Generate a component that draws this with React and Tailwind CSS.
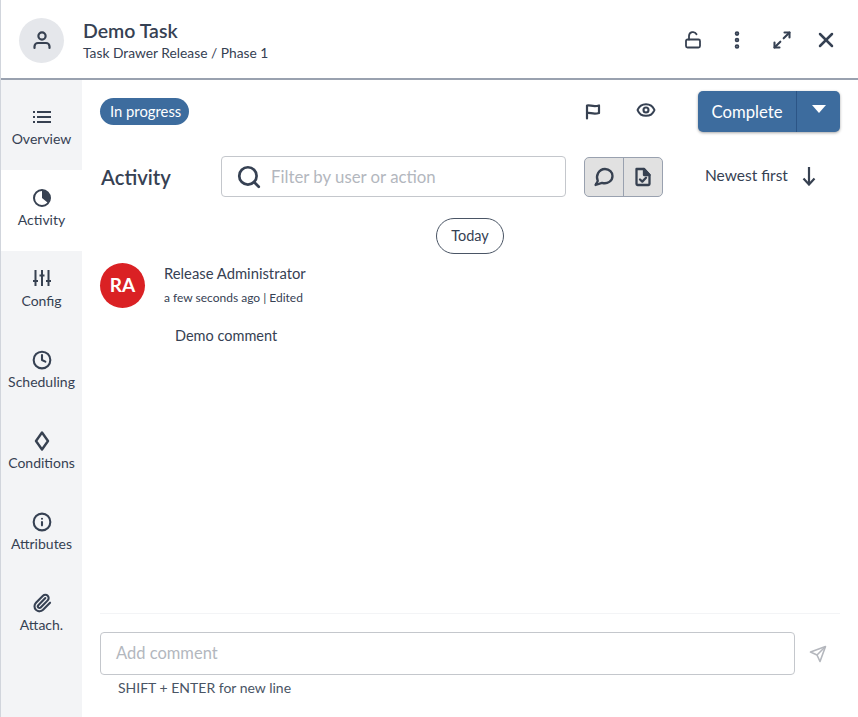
import React from "react";
import {
  Clock,
  Eye,
  Maximize2,
  Paperclip,
  Search,
  X,
  Info,
  EllipsisVertical,
} from "lucide-react";

const dark = "#374151";

const ListIcon = () => (
  <svg width="20" height="20" viewBox="0 0 20 20" fill="none" stroke={dark} strokeWidth="2">
    <path d="M5 5 H19 M5 10 H19 M5 15 H19" />
    <path d="M1 5 H3 M1 10 H3 M1 15 H3" />
  </svg>
);

const ActivityIcon = () => (
  <svg width="20" height="20" viewBox="0 0 20 20" fill="none">
    <circle cx="10" cy="10" r="8" stroke={dark} strokeWidth="2" />
    <path d="M10 2.5 A7.5 7.5 0 0 1 15.8 14.8 L10 10 Z" fill={dark} />
  </svg>
);

const SlidersIcon = () => (
  <svg width="20" height="20" viewBox="0 0 20 20" fill="none" stroke={dark} strokeWidth="2">
    <path d="M3.5 1 V17 M10 1 V17 M16.5 1 V17" />
    <path d="M1 12 H6 M7.5 6.5 H12.5 M14 12 H19" />
  </svg>
);

const DiamondIcon = () => (
  <svg width="20" height="20" viewBox="0 0 20 20" fill="none">
    <path d="M10 1.5 L16 10 L10 18.5 L4 10 Z" stroke={dark} strokeWidth="2.4" strokeLinejoin="round" />
  </svg>
);

const tabs = [
  { label: "Overview", icon: <ListIcon /> },
  { label: "Activity", icon: <ActivityIcon />, active: true },
  { label: "Config", icon: <SlidersIcon /> },
  { label: "Scheduling", icon: <Clock size={20} strokeWidth={2.5} /> },
  { label: "Conditions", icon: <DiamondIcon /> },
  { label: "Attributes", icon: <Info size={20} strokeWidth={2.5} /> },
  { label: "Attach.", icon: <Paperclip size={20} strokeWidth={2.5} /> },
];

const LockIcon = () => (
  <svg width="18" height="18" viewBox="0 0 18 18" fill="none" stroke={dark} strokeWidth="1.8" strokeLinecap="round" strokeLinejoin="round">
    <rect x="2" y="8.5" width="14" height="8" rx="1.5" />
    <path d="M5 8.5 V5 A4 4 0 0 1 12.5 3.2" />
  </svg>
);

const FlagIcon = () => (
  <svg width="20" height="20" viewBox="0 0 20 20" fill="none" stroke={dark} strokeWidth="2.2" strokeLinejoin="round" strokeLinecap="round">
    <path d="M5 17.5 V4.5 C8 3.5 11 6.5 17 4.5 V12 C11 14 8 11 5 12" />
  </svg>
);

const BubbleIcon = () => (
  <svg width="20" height="20" viewBox="0 0 20 20" fill="none" stroke={dark} strokeWidth="2.3" strokeLinejoin="round">
    <path d="M1.5 18 L3.8 14 C1.5 9 4.5 2 11 2 C15.5 2 18.5 5.5 18.5 9 C18.5 14 13.5 17.5 8 15.8 Z" />
  </svg>
);

const FileCheckIcon = () => (
  <svg width="20" height="20" viewBox="0 0 20 20" fill="none" stroke={dark} strokeWidth="2.3" strokeLinejoin="round" strokeLinecap="round">
    <path d="M3.5 2 H11 L16.5 8 V17 A1 1 0 0 1 15.5 18 H4.5 A1 1 0 0 1 3.5 17 Z" />
    <path d="M11 2 V8 H16.5 Z" fill={dark} />
    <path d="M7 12.5 L9.3 14.6 L13 10.8" />
  </svg>
);

const SortArrow = () => (
  <svg width="16" height="20" viewBox="0 0 16 20" fill="none" stroke={dark} strokeWidth="2.2">
    <path d="M8 1 V18" />
    <path d="M2.5 12.5 L8 18.5 L13.5 12.5" />
  </svg>
);

const PaperPlane = () => (
  <svg width="18" height="18" viewBox="0 0 18 18" fill="none" stroke="#b4b7bd" strokeWidth="1.6" strokeLinejoin="round">
    <path d="M1.5 7 L16.5 1.5 L11 16.5 L8 10 Z" />
    <path d="M8 10 L16.5 1.5" />
  </svg>
);

export default function App() {
  return (
    <div className="h-[717px] w-[858px] flex flex-col bg-white border-l border-gray-300 text-gray-700 font-['Lato',sans-serif] overflow-hidden">
      <header className="h-[80px] shrink-0 flex items-center border-b-2 border-gray-400 pl-[18px] pr-[20px] pt-[2px]">
        <div className="w-[45px] h-[45px] rounded-full bg-gray-200 flex items-center justify-center">
          <svg width="20" height="20" viewBox="0 0 20 20" fill="none" stroke={dark} strokeWidth="2.2" strokeLinecap="round">
            <circle cx="10" cy="6" r="3.6" />
            <path d="M2.5 18 V16.5 A3.5 3.5 0 0 1 6 13 H14 A3.5 3.5 0 0 1 17.5 16.5 V18" />
          </svg>
        </div>
        <div className="ml-[19px] pt-[2px]">
          <div className="text-[19.5px] leading-[24px] font-semibold">Demo Task</div>
          <div className="text-[13.8px] leading-[20px]">Task Drawer Release / Phase 1</div>
        </div>
        <div className="ml-auto flex items-center text-gray-700">
          <LockIcon />
          <EllipsisVertical size={22} strokeWidth={3} className="ml-[24px]" />
          <Maximize2 size={20} strokeWidth={2.5} className="ml-[24px]" />
          <X size={24} strokeWidth={2.5} className="ml-[22px]" />
        </div>
      </header>

      <div className="flex flex-1 min-h-0">
        <nav className="w-[81px] shrink-0 bg-gray-100 pt-[9px]">
          {tabs.map((t) => (
            <div
              key={t.label}
              className={`h-[81px] flex flex-col items-center pt-[18px] ${t.active ? "bg-white" : ""}`}
            >
              <div className="h-[20px] flex items-center justify-center">{t.icon}</div>
              <div className="text-[14px] leading-[20px] mt-[2px]">{t.label}</div>
            </div>
          ))}
        </nav>

        <main className="flex-1 min-w-0 flex flex-col px-[18px]">
          <div className="flex items-center h-[64px] pb-[2px]">
            <span className="bg-[#3d6c9e] text-white text-[14.8px] leading-[27px] h-[27px] pl-[10px] pr-[8px] rounded-full">
              In progress
            </span>
            <div className="ml-auto flex items-center">
              <FlagIcon />
              <Eye size={20} strokeWidth={2.5} className="ml-[34px] mb-[2px]" />
              <div className="ml-[42px] flex h-[41px] w-[142px] rounded-[5px] bg-[#3d6c9e] text-white shadow-[0_1px_3px_rgba(0,0,0,0.35)]">
                <div className="w-[99px] flex items-center justify-center text-[16.7px] pt-[3px] border-r border-[#2c5586]">
                  Complete
                </div>
                <div className="flex-1 flex items-center justify-center pb-[4px]">
                  <div className="w-0 h-0 border-l-[7px] border-r-[7px] border-t-[8px] border-l-transparent border-r-transparent border-t-white" />
                </div>
              </div>
            </div>
          </div>

          <div className="flex items-center h-[41px] mt-[12px]">
            <h2 className="text-[20.3px] font-semibold w-[121px] pl-[1px] pt-[1px]">Activity</h2>
            <div className="w-[345px] h-[41px] border border-[#c4c7cc] rounded-[4px] flex items-center pl-[14px]">
              <Search size={26} strokeWidth={2.5} />
              <span className="ml-[9px] text-[16.8px] text-[#b3b7be]">Filter by user or action</span>
            </div>
            <div className="ml-[18px] flex h-[40px] w-[79px] rounded-[5px] border border-gray-400 bg-[#e1e1e1]">
              <div className="w-[39px] flex items-center justify-center border-r border-gray-400">
                <BubbleIcon />
              </div>
              <div className="flex-1 flex items-center justify-center">
                <FileCheckIcon />
              </div>
            </div>
            <div className="ml-[42px] text-[15.5px] flex items-center pb-[1px]">
              Newest first
              <span className="ml-[13px]"><SortArrow /></span>
            </div>
          </div>

          <div className="flex justify-center mt-[21px]">
            <span className="border border-gray-600 rounded-full h-[36px] leading-[34px] px-[14px] text-[14.5px]">
              Today
            </span>
          </div>

          <div className="flex mt-[9px]">
            <div className="w-[45px] h-[45px] rounded-full bg-[#da2124] text-white font-bold text-[19px] flex items-center justify-center">
              RA
            </div>
            <div className="ml-[19px]">
              <div className="text-[14.8px] leading-[20px]">Release Administrator</div>
              <div className="text-[12px] leading-[20px] mt-[5px]">a few seconds ago | Edited</div>
              <div className="text-[14.5px] leading-[20px] mt-[18px] ml-[11px]">Demo comment</div>
            </div>
          </div>

          <div className="mt-auto border-t border-gray-100 pt-[18px] pb-[20px]">
            <div className="flex items-center">
              <div className="w-[695px] h-[43px] border border-[#c4c7cc] rounded-[4px] flex items-center pl-[15px] text-[16.5px] text-[#b3b7be]">
                Add comment
              </div>
              <div className="ml-[14px]">
                <PaperPlane />
              </div>
            </div>
            <div className="text-[14px] leading-[18px] mt-[4px] ml-[18px] text-gray-600">
              SHIFT + ENTER for new line
            </div>
          </div>
        </main>
      </div>
    </div>
  );
}
